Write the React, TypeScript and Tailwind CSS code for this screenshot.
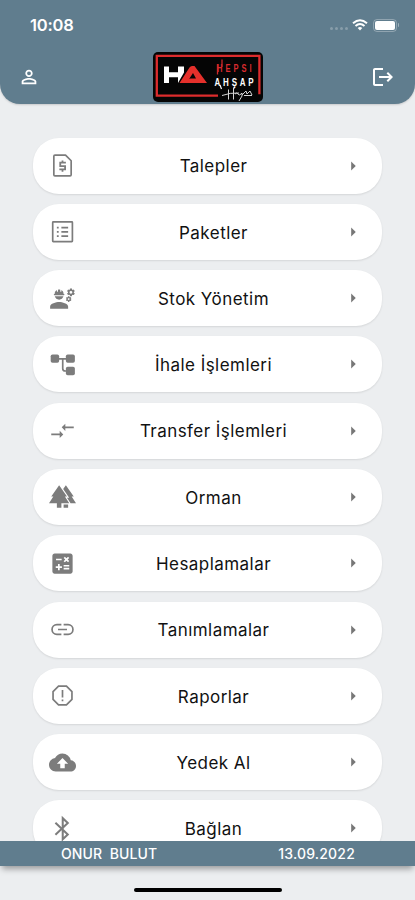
import React from 'react';
import {
  MdArrowRight,
  MdBackup,
  MdCalculate,
  MdEngineering,
  MdForest,
  MdLogout,
  MdPersonOutline,
} from 'react-icons/md';

interface IconProps {
  size?: number;
  className?: string;
}

interface MenuItem {
  label: string;
  icon: React.ComponentType<IconProps>;
}

// Thin outline icon on a 24px grid
const LineIcon: React.FC<IconProps & { children: React.ReactNode }> = ({ size = 24, className, children }) => (
  <svg
    width={size}
    height={size}
    viewBox="0 0 24 24"
    fill="none"
    stroke="currentColor"
    strokeWidth="1.500"
    className={className}
  >
    {children}
  </svg>
);

const RequestIcon: React.FC<IconProps> = (props) => (
  <LineIcon {...props}>
    <path d="M14.700 2.800H5.300Q4.300 2.800 4.300 3.800v16.400q0 1 1 1h13.400q1 0 1-1V7.800z" strokeLinejoin="round" />
    <path d="M15 9.500H10v3h4.300v3H9.200M12 7.500v2M12 15.500v2" strokeWidth="1.600" />
  </LineIcon>
);

const ListIcon: React.FC<IconProps> = (props) => (
  <LineIcon {...props}>
    <rect x="3.300" y="3.500" width="17.500" height="17.500" rx="0.500" />
    <path d="M7 8.500h1.600M7 12.300h1.600M7 16.100h1.600M11 8.500h6M11 12.300h6M11 16.100h6" />
  </LineIcon>
);

const TreeIcon: React.FC<IconProps> = (props) => (
  <LineIcon {...props}>
    <path d="M8 7h8M12.200 7v8.500q0 2.300 2.300 2.300H16" />
    <g fill="currentColor" stroke="none">
      <rect x="1.500" y="3" width="7.500" height="7.500" rx="1.600" />
      <rect x="15" y="3" width="8" height="7.500" rx="1.600" />
      <rect x="15" y="14" width="8" height="7.500" rx="1.600" />
    </g>
  </LineIcon>
);

const TransferIcon: React.FC<IconProps> = (props) => (
  <LineIcon {...props}>
    <path d="M2 15.500h8M22 9.200h-8" strokeWidth="1.600" />
    <path d="M9.500 12.300v6.400l3.200-3.200zM14.500 6v6.400l-3.200-3.200z" fill="currentColor" stroke="none" />
  </LineIcon>
);

const LinkIcon: React.FC<IconProps> = (props) => (
  <LineIcon {...props}>
    <path d="M11 7.700H7a4.300 4.300 0 0 0 0 8.600h4M13 7.700h4a4.300 4.300 0 0 1 0 8.600h-4M8 12h8" />
  </LineIcon>
);

const ReportIcon: React.FC<IconProps> = (props) => (
  <LineIcon {...props}>
    <path d="M8.500 3.600h7l4.900 4.900v7l-4.900 4.900h-7l-4.900-4.900v-7z" />
    <path d="M12 7v6.700M12 15.500V17" />
  </LineIcon>
);

const BluetoothIcon: React.FC<IconProps> = (props) => (
  <LineIcon {...props}>
    <path d="M5.700 6.900l11 10.400-4.500 4.300V2.800l4.500 4.300-11 10.400" strokeWidth="1.800" />
  </LineIcon>
);

const menuItems: MenuItem[] = [
  { label: 'Talepler', icon: RequestIcon },
  { label: 'Paketler', icon: ListIcon },
  { label: 'Stok Yönetim', icon: MdEngineering },
  { label: 'İhale İşlemleri', icon: TreeIcon },
  { label: 'Transfer İşlemleri', icon: TransferIcon },
  { label: 'Orman', icon: MdForest },
  { label: 'Hesaplamalar', icon: MdCalculate },
  { label: 'Tanımlamalar', icon: LinkIcon },
  { label: 'Raporlar', icon: ReportIcon },
  { label: 'Yedek Al', icon: MdBackup },
  { label: 'Bağlan', icon: BluetoothIcon },
];

const Logo: React.FC = () => (
  <svg width="110" height="50" viewBox="0 0 110 50" className="block" aria-label="HA Hepsi Ahşap">
    <rect width="110" height="50" rx="5" fill="#050505" />
    <path d="M65 43.600H3.800V3.800h102.600v38.500" fill="none" stroke="#dd2c2d" strokeWidth="2.300" />
    <path d="M11 14.500h5v5.700h9v-5.700h6v6L25 31v-5.800h-9V31h-5z" fill="#fff" />
    <path d="M26.500 31l10-15.500q1-1.500 2.500-1.500h2.500L54 31H33.500q1.500-4.500 4-4.500h5.500L40 21l-6.500 10z" fill="#e5302b" />
    <g fontFamily="'Liberation Sans', sans-serif" fontWeight="700" fontSize="10">
      <text transform="translate(64 19.500) scale(0.75 1)" fill="#d92b2f" textLength="46">HEPSI</text>
      <text transform="translate(61.500 34) scale(0.8 1)" fill="#fff" textLength="49">AHŞAP</text>
    </g>
    <path d="M64.500 12v10.500M69 7.500V15" fill="none" stroke="#c9282c" strokeWidth="1.300" />
    <path d="M67 33l1.500 4M81.500 35l-1 2" fill="none" stroke="#fff" strokeWidth="1.200" />
    <path
      d="M69 43.500q8-3 17-2.500M75.500 37.500v10M80.500 37v10.500M82 42q2-2 3 0t3 0l1-1v3l-3 5M89 43l4-4 1 3 3-3 2 4M91 43.500h8"
      fill="none"
      stroke="#d5d5d5"
      strokeWidth="1"
    />
  </svg>
);

const StatusBar: React.FC = () => (
  <div className="flex h-[50px] items-center justify-between pr-[16px] pl-[30px]">
    <span className="text-[16.5px] font-semibold tracking-[-0.2px]">10:08</span>
    <div className="flex items-center">
      <div className="mt-[7px] mr-[4px] flex gap-[2px]">
        {[0, 1, 2, 3].map((dot) => (
          <span key={dot} className="size-[3px] rounded-full bg-white/25" />
        ))}
      </div>
      <svg width="16" height="12" viewBox="0 0 16 12" fill="none" stroke="#fff" strokeWidth="2">
        <path d="M1 4.300q7-6 14 0M3.500 7q4.500-4 9 0" />
        <path d="M5.700 8.900q2.300-1.800 4.600 0L8 11.500z" fill="#fff" stroke="none" />
      </svg>
      <span className="ml-[5px] h-[13px] w-[24px] rounded-[4px] border border-white/30 p-px">
        <span className="block h-full rounded-[2px] bg-white" />
      </span>
      <span className="ml-px h-[4px] w-[1.5px] rounded-r bg-white/40" />
    </div>
  </div>
);

const Header: React.FC = () => (
  <header className="h-[104px] shrink-0 rounded-b-[20px] bg-[#607d8e] text-white shadow-[0_1px_2px_rgba(0,0,0,0.15)]">
    <StatusBar />
    <div className="grid grid-cols-[135px_110px_1fr] items-center pt-[2px] pr-[20px] pl-[18px]">
      <MdPersonOutline size={22} />
      <Logo />
      <MdLogout size={24} className="justify-self-end" />
    </div>
  </header>
);

const MenuCard: React.FC<{ item: MenuItem }> = ({ item }) => {
  const Icon = item.icon;
  return (
    <button className="flex h-[56px] w-full shrink-0 items-center rounded-[26px] bg-white pr-[19px] pl-[16px] shadow-[0_1px_2px_rgba(0,0,0,0.1)]">
      <Icon size={27} className="shrink-0 text-[#7c7c7c]" />
      <span className="flex-1 pt-[3px] pl-[9px] text-center text-[17px] tracking-[0.45px] text-[#111]">
        {item.label}
      </span>
      <MdArrowRight size={22} className="-mr-px shrink-0 text-[#777]" />
    </button>
  );
};

const App: React.FC = () => {
  return (
    <div className="flex h-[900px] w-[415px] flex-col overflow-hidden bg-[#eceef0] font-['Inter','Liberation_Sans',sans-serif]">
      <Header />
      <main className="flex min-h-0 flex-1 flex-col gap-[10.3px] overflow-hidden px-[33px] pt-[33.5px]">
        {menuItems.map((item) => (
          <MenuCard key={item.label} item={item} />
        ))}
      </main>
      <footer className="relative h-[59px] shrink-0">
        <div className="flex h-[25px] items-center justify-between bg-[#607d8e] pr-[60px] pl-[61px] text-[14px] font-medium text-white shadow-[0_5px_6px_-2px_rgba(0,0,0,0.35)]">
          <span className="whitespace-pre tracking-[0.1px]">ONUR  BULUT</span>
          <span className="tracking-[0.2px]">13.09.2022</span>
        </div>
        {/* Home indicator */}
        <div className="mx-auto mt-[22px] h-[4px] w-[148px] rounded-full bg-black" />
      </footer>
    </div>
  );
};

export default App;
